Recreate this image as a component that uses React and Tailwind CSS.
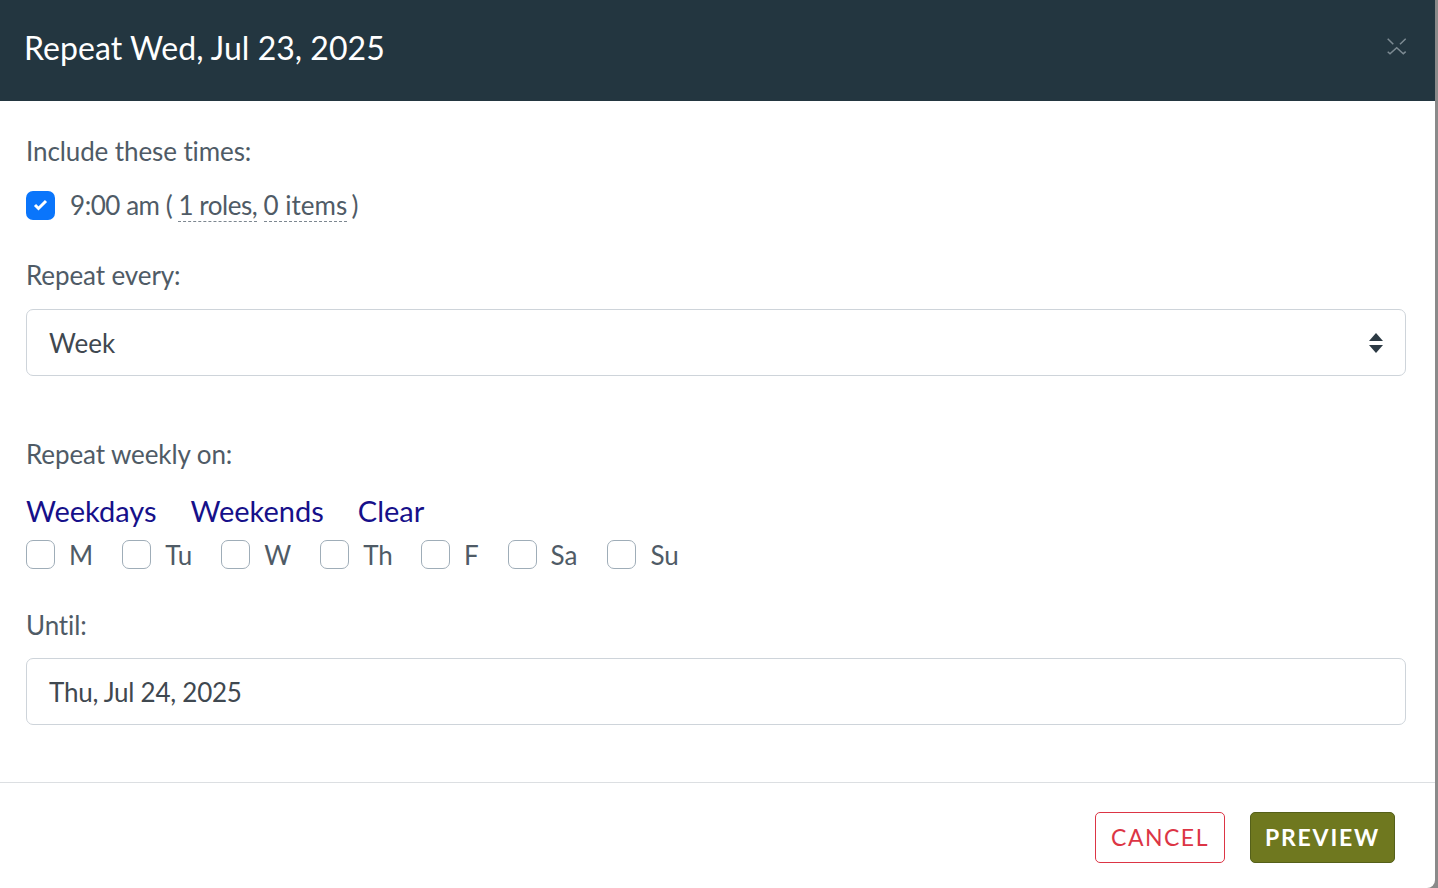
import React from "react";

const DAYS = ["M", "Tu", "W", "Th", "F", "Sa", "Su"];
const DAY_GAPS = ["mr-[29px]", "mr-[29px]", "mr-[29px]", "mr-[28px]", "mr-[29px]", "mr-[30px]", ""];

const Label = ({ children, className = "" }) => (
  <div className={`text-[26px] leading-[36px] text-[#4f5b66] tracking-[-0.1px] ${className}`}>{children}</div>
);

const CloseIcon = () => (
  <svg width="20" height="18" viewBox="0 0 20 18" fill="none" stroke="#7d8b93" strokeWidth="1.5">
    <path d="M.7.7l5.6 5.6M18.7.7L13 6.3M.7 13.7L3 15.7l6.7-6 6.6 6 2.4-2" />
  </svg>
);

const DayCheckbox = ({ label, className }) => (
  <label className={`flex items-center ${className}`}>
    <span className="w-[29px] h-[29px] rounded-[7px] border border-[#9fadb8] bg-white" />
    <span className="ml-[14px] pt-[1px] text-[26px] leading-[36px] text-[#4f5b66]">{label}</span>
  </label>
);

export default function App() {
  return (
    <div className="h-[888px] w-[1438px] overflow-hidden bg-[#8a8a8a] font-['Lato','Open_Sans',sans-serif]">
      <div className="w-[1435px] h-[888px] bg-white rounded-br-[8px] flex flex-col">
        {/* Header */}
        <div className="h-[101px] shrink-0 bg-[#233640] flex items-center justify-between pl-[24px] pr-[28px]">
          <h1 className="text-[32px] text-white tracking-[0.04px] pb-[5px]">Repeat Wed, Jul 23, 2025</h1>
          <span className="pb-[8px]"><CloseIcon /></span>
        </div>

        {/* Body */}
        <div className="flex-1 px-[26px] pr-[29px] pt-[32px]">
          <Label>Include these times:</Label>

          <div className="flex items-center mt-[18px]">
            <span className="w-[29px] h-[29px] rounded-[7px] bg-[#0a75fb] flex items-center justify-center">
              <svg width="15" height="12" viewBox="0 0 15 12" fill="none" stroke="white" strokeWidth="3">
                <path d="M2 6l3.5 3.5L13 2" />
              </svg>
            </span>
            <span className="ml-[15px] text-[26px] leading-[36px] text-[#4f5b66] tracking-[-0.45px]">
              9:00 am ({" "}
              <span className="border-b border-dashed border-[#7d8790]">1 roles,</span>{" "}
              <span className="border-b border-dashed border-[#7d8790] tracking-[0px]">0 items</span>{" "}
              <span className="-ml-[2px]">)</span>
            </span>
          </div>

          <Label className="mt-[34px]">Repeat every:</Label>

          <div className="mt-[16px] h-[67px] rounded-[7px] border border-[#ced4da] flex items-center justify-between pl-[22px] pr-[21px]">
            <span className="pt-[2px] text-[26px] text-[#3f4850]">Week</span>
            <svg width="16" height="20" viewBox="0 0 16 20" fill="#2c3a44">
              <path d="M8 0l7 8H1zM8 20l-7-8h14z" />
            </svg>
          </div>

          <Label className="mt-[60px]">Repeat weekly on:</Label>

          <div className="flex mt-[19px] text-[29px] leading-[40px] text-[#16108a] gap-[34px]">
            <a>Weekdays</a>
            <a>Weekends</a>
            <a>Clear</a>
          </div>

          <div className="flex mt-[5px]">
            {DAYS.map((d, i) => (
              <DayCheckbox key={d} label={d} className={DAY_GAPS[i]} />
            ))}
          </div>

          <Label className="mt-[34px]">Until:</Label>

          <div className="mt-[15px] h-[67px] rounded-[7px] border border-[#ced4da] flex items-center pl-[22px]">
            <span className="pt-[2px] text-[26px] text-[#3f4850] tracking-[-0.25px]">Thu, Jul 24, 2025</span>
          </div>
        </div>

        {/* Footer */}
        <div className="h-[106px] shrink-0 border-t border-[#dcdfe2] flex items-start justify-end pt-[29px] pr-[40px] gap-[25px]">
          <button className="h-[51px] w-[130px] rounded-[5px] border border-[#dc3545] text-[#dc3545] text-[23px] tracking-[1.5px]">
            CANCEL
          </button>
          <button className="h-[51px] w-[145px] rounded-[5px] border border-[#55601a] bg-[#6f781f] text-white font-bold text-[23px] tracking-[1.8px]">
            PREVIEW
          </button>
        </div>
      </div>
    </div>
  );
}
